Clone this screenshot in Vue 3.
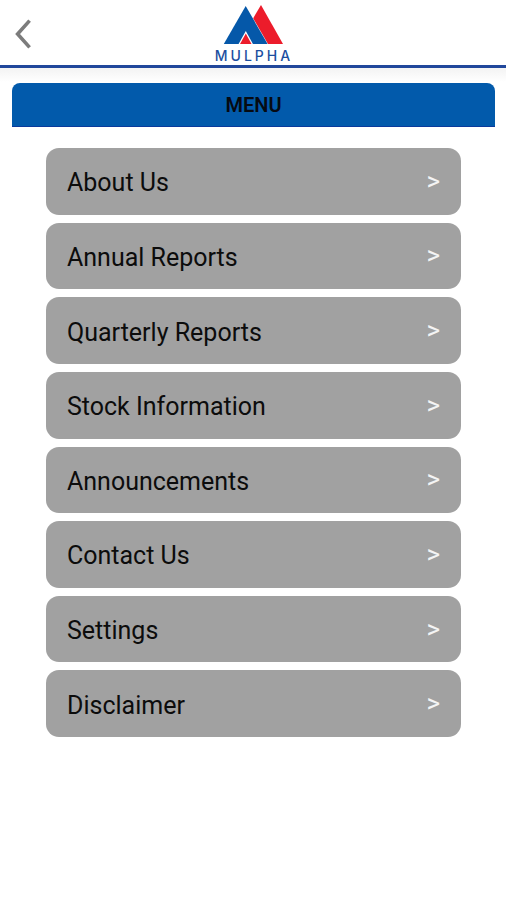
<script setup>
const items = [
  'About Us',
  'Annual Reports',
  'Quarterly Reports',
  'Stock Information',
  'Announcements',
  'Contact Us',
  'Settings',
  'Disclaimer',
]
</script>

<template>
  <div class="screen">
    <header class="topbar">
      <button class="back" type="button" aria-label="Back">
        <svg width="18" height="30" viewBox="0 0 18 30" aria-hidden="true">
          <path d="M15.6 1.6 L3.6 15 L15.6 28.4" fill="none" stroke="#7c7c7c" stroke-width="3.6" />
        </svg>
      </button>
      <div class="brand">
        <svg class="mark" width="60" height="40" viewBox="0 0 60 40" aria-hidden="true">
          <path d="M38 0 L60 39 H15 Z" fill="#ec1c2b" />
          <path d="M22.7 0.3 L45.3 39.5 H0 Z" fill="#fff" />
          <path d="M22.7 1 L44.6 39 H0.8 Z" fill="#0558a9" />
          <path d="M22.8 26 L30.5 40 H15 Z" fill="#fff" />
          <path d="M22.8 28.4 L28.5 39 H17 Z" fill="#ec1c2b" />
        </svg>
        <span class="wordmark">MULPHA</span>
      </div>
    </header>
    <main class="content">
      <h1 class="title">MENU</h1>
      <nav class="menu">
        <a v-for="item in items" :key="item" class="item" href="#">
          <span>{{ item }}</span>
          <span class="arrow" aria-hidden="true">&gt;</span>
        </a>
      </nav>
    </main>
  </div>
</template>

<style>
body {
  margin: 0;
  background: #fff;
}
</style>

<style scoped>
.screen {
  min-height: 100vh;
  background: #fff;
  font-family: Roboto, "Liberation Sans", sans-serif;
}
.topbar {
  display: grid;
  grid-template-columns: 48px 1fr 48px;
  height: 65px;
  border-bottom: 3px solid #21479b;
}
.back {
  display: flex;
  align-items: center;
  padding: 3px 0 0 14px;
  border: 0;
  background: none;
}
.brand {
  display: flex;
  flex-direction: column;
  align-items: center;
  padding-top: 5px;
}
.mark {
  display: block;
}
.wordmark {
  padding-left: 2px;
  margin-top: 3px;
  font-family: Inter, sans-serif;
  font-size: 14px;
  font-weight: 500;
  line-height: 16px;
  letter-spacing: 3px;
  color: #1c4f9f;
}
.content {
  padding: 15px 11px 0 12px;
  background: linear-gradient(#f3f3f3, #fff 14px);
}
.title {
  margin: 0;
  padding-top: 2px;
  border-bottom: 1px solid #0a3a9c;
  border-radius: 8px 8px 0 0;
  background: #025aab;
  color: #060a12;
  font-size: 20px;
  font-weight: 600;
  line-height: 41px;
  text-align: center;
}
.menu {
  display: grid;
  grid-auto-rows: 1fr;
  gap: 8px;
  min-height: 589px;
  margin: 21px 34px 0;
}
.item {
  display: flex;
  align-items: center;
  justify-content: space-between;
  padding: 4px 21px 0 21px;
  border-radius: 13px;
  background: #a1a1a1;
  color: #0c0c0c;
  font-size: 25px;
  line-height: 32px;
  text-decoration: none;
}
.arrow {
  padding-bottom: 5px;
  color: #f4f4f4;
  font-size: 26px;
}
</style>
